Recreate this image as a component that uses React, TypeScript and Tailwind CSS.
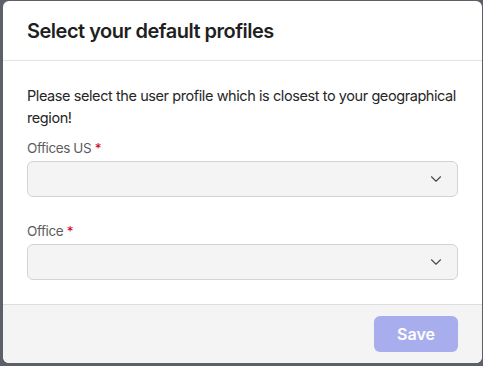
import { ChevronDown } from "lucide-react";

const fields = ["Offices US", "Office"];

const SelectField = ({ label }: { label: string }) => (
  <div className="flex flex-col gap-[4px]">
    <label className="text-[13.5px] leading-[18px] tracking-[-0.4px] text-[#5d5d5d]">
      {label} <span className="text-[#d0021b]">*</span>
    </label>
    <div className="flex h-[36px] items-center justify-end rounded-[6px] border border-[#d3d3d3] bg-[#f4f4f4] pr-[12px]">
      <ChevronDown className="h-[18px] w-[18px] text-[#4a4a4a]" strokeWidth={1.5} />
    </div>
  </div>
);

export default function App() {
  return (
    <div
      className="h-[366px] w-[483px] overflow-hidden bg-[#5b6069] pl-[3px] pt-[1px]"
      style={{ fontFamily: "Inter, 'Noto Sans', sans-serif" }}
    >
      <div className="flex h-[362px] w-[479px] flex-col overflow-hidden rounded-[6px] bg-white">
        {/* Header */}
        <div className="flex h-[60px] items-center border-b border-[#e2e2e2] px-[24px]">
          <h1 className="text-[20px] font-semibold tracking-[-0.5px] text-[#1f1f1f]">
            Select your default profiles
          </h1>
        </div>

        {/* Body */}
        <div className="flex flex-1 flex-col gap-[10px] px-[24px] pt-[24px]">
          <p className="whitespace-nowrap text-[14.5px] leading-[22px] tracking-[-0.42px] text-[#262626]">
            Please select the user profile which is closest to your geographical
            <br />
            region!
          </p>
          <div className="flex flex-col gap-[25px]">
            {fields.map((f) => (
              <SelectField key={f} label={f} />
            ))}
          </div>
        </div>

        {/* Footer */}
        <div className="flex h-[59px] items-center justify-end border-t border-[#dedede] bg-[#f4f4f4] pr-[24px]">
          <button className="h-[36px] w-[84px] rounded-[6px] bg-[#a8aeed] text-[16px] font-semibold text-white">
            Save
          </button>
        </div>
      </div>
    </div>
  );
}
